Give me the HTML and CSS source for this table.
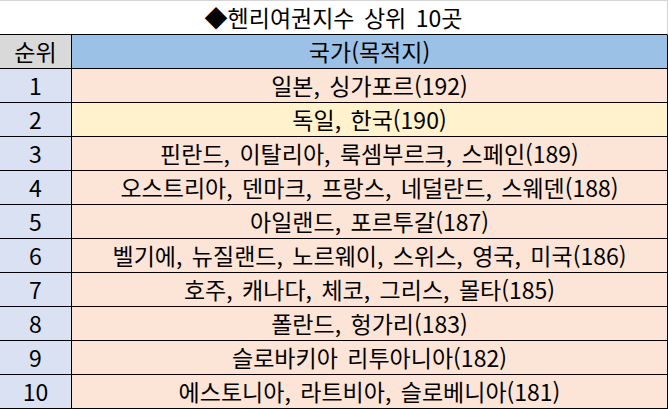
FILE: index.html
```html
<!DOCTYPE html>
<html lang="ko">
<head>
<meta charset="utf-8">
<title>헨리여권지수 상위 10곳</title>
<link rel="stylesheet" href="styles.css">
</head>
<body>
<div class="sheet">
  <div class="title">◆헨리여권지수 상위 10곳</div>
  <div class="grid">
    <div class="cell head-rank">순위</div>
    <div class="cell head-country">국가(목적지)</div>

    <div class="cell rank">1</div>
    <div class="cell country">일본, 싱가포르(192)</div>

    <div class="cell rank">2</div>
    <div class="cell country yellow">독일, 한국(190)</div>

    <div class="cell rank">3</div>
    <div class="cell country">핀란드, 이탈리아, 룩셈부르크, 스페인(189)</div>

    <div class="cell rank">4</div>
    <div class="cell country">오스트리아, 덴마크, 프랑스, 네덜란드, 스웨덴(188)</div>

    <div class="cell rank">5</div>
    <div class="cell country">아일랜드, 포르투갈(187)</div>

    <div class="cell rank">6</div>
    <div class="cell country">벨기에, 뉴질랜드, 노르웨이, 스위스, 영국, 미국(186)</div>

    <div class="cell rank">7</div>
    <div class="cell country">호주, 캐나다, 체코, 그리스, 몰타(185)</div>

    <div class="cell rank">8</div>
    <div class="cell country">폴란드, 헝가리(183)</div>

    <div class="cell rank">9</div>
    <div class="cell country">슬로바키아 리투아니아(182)</div>

    <div class="cell rank">10</div>
    <div class="cell country">에스토니아, 라트비아, 슬로베니아(181)</div>
  </div>
</div>
</body>
</html>
```

FILE: styles.css
```css
html, body {
  margin: 0;
  padding: 0;
  background: #ffffff;
}

body {
  font-family: "Noto Sans CJK KR", "Noto Sans", sans-serif;
  color: #000000;
}

.sheet {
  width: 668px;
  height: 409px;
  box-sizing: border-box;
  border-top: 1px solid #d4d4d4;
  overflow: hidden;
}

.title {
  box-sizing: border-box;
  border-right: 1px solid #d4d4d4;
  border-bottom: 1px solid #000000;
  height: 34px;
  display: flex;
  align-items: center;
  justify-content: center;
  font-size: 23px;
  line-height: 1;
  word-spacing: 3px;
  padding-bottom: 1px;
}

.grid {
  display: grid;
  grid-template-columns: 71px 595px;
  grid-auto-rows: 33px;
  gap: 1px;
  background: #000000;
  border-right: 1px solid #000000;
  border-bottom: 1px solid #000000;
}

.cell {
  display: flex;
  align-items: center;
  justify-content: center;
  font-size: 23px;
  line-height: 1;
  word-spacing: 3px;
  white-space: nowrap;
  padding-bottom: 1px;
}

.head-rank {
  background: #d9d9d9;
}

.head-country {
  background: #9bc2e6;
}

.rank {
  background: #d9e1f2;
}

.country {
  background: #fce4d6;
}

.country.yellow {
  background: #fff2cc;
}
```
